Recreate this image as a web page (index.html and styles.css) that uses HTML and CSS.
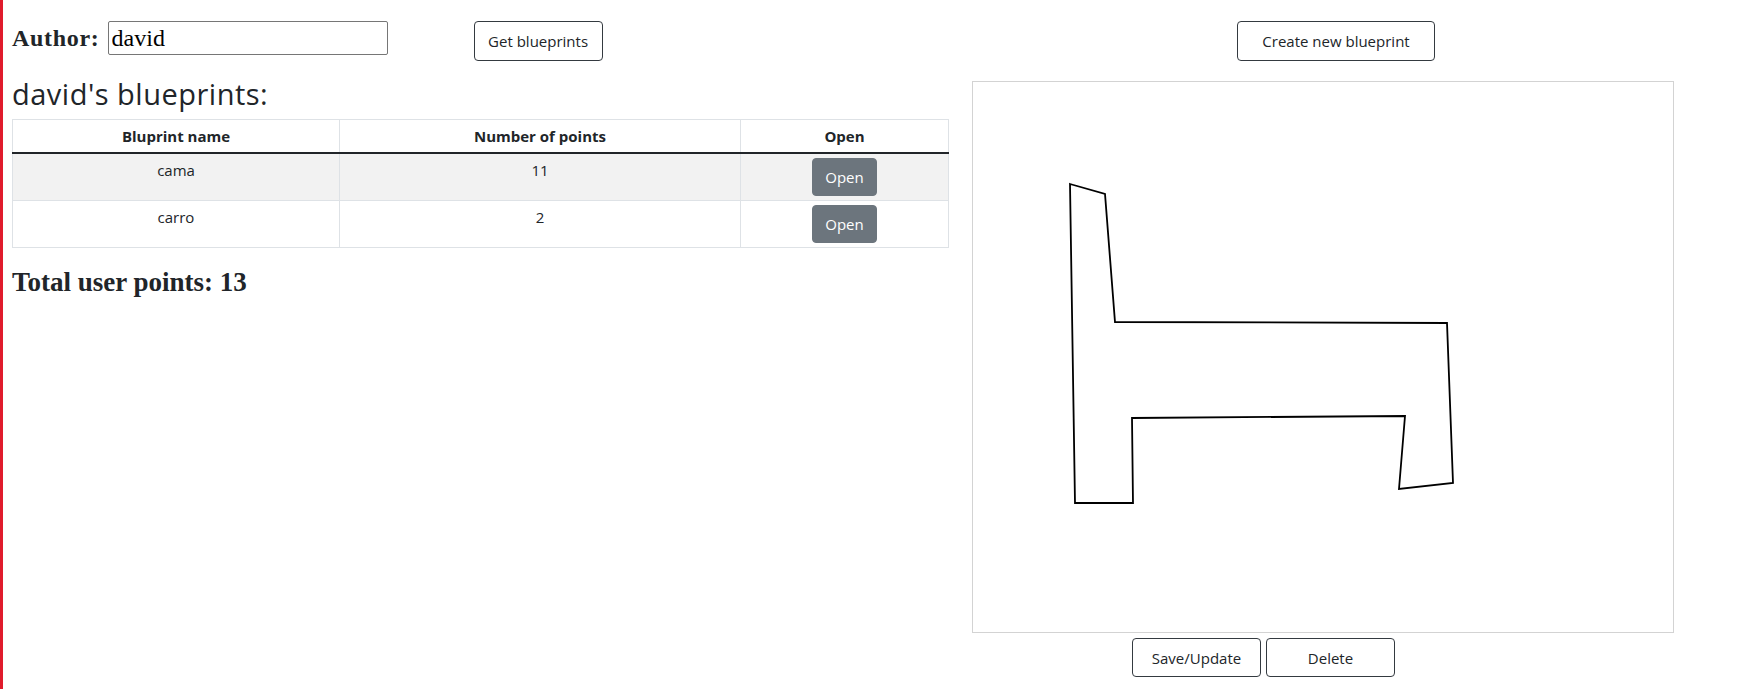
FILE: index.html
```html
<!DOCTYPE html>
<html lang="en">
<head>
<meta charset="utf-8">
<title>Blueprints</title>
<link rel="stylesheet" href="styles.css">
</head>
<body>
<div class="page">
  <section class="left">
    <div class="author-row">
      <label class="author-label" for="author">Author:</label>
      <input class="author-input" id="author" type="text" value="david">
      <button class="btn btn-outline get-btn" type="button">Get blueprints</button>
    </div>
    <h3 class="list-title">david's blueprints:</h3>
    <table class="bp-table">
      <colgroup>
        <col class="c-name">
        <col class="c-points">
        <col class="c-open">
      </colgroup>
      <thead>
        <tr><th>Bluprint name</th><th>Number of points</th><th>Open</th></tr>
      </thead>
      <tbody>
        <tr class="striped"><td>cama</td><td>11</td><td><button class="btn btn-secondary" type="button">Open</button></td></tr>
        <tr><td>carro</td><td>2</td><td><button class="btn btn-secondary" type="button">Open</button></td></tr>
      </tbody>
    </table>
    <h4 class="total">Total user points: 13</h4>
  </section>
  <section class="right">
    <div class="create-row">
      <button class="btn btn-outline create-btn" type="button">Create new blueprint</button>
    </div>
    <div class="canvas-box">
      <svg class="drawing" width="700" height="550" viewBox="0 0 700 550">
        <polygon points="97,102 132,112 142,240 474,241 480,401 426,407 432,334 159,336 160,421 102,421" fill="none" stroke="#000" stroke-width="1.8" stroke-linejoin="miter"/>
      </svg>
    </div>
    <div class="actions">
      <button class="btn btn-outline action-btn" type="button">Save/Update</button>
      <button class="btn btn-outline action-btn" type="button">Delete</button>
    </div>
  </section>
</div>
</body>
</html>
```
FILE: styles.css
```css
html, body {
  margin: 0;
  padding: 0;
  background: #fff;
}

body {
  font-family: "Open Sans", "Noto Sans", sans-serif;
  color: #212529;
  font-size: 15px;
  line-height: 24px;
}

.page {
  display: flex;
  align-items: flex-start;
  gap: 24px;
  min-height: 689px;
  border-left: 3px solid #e01b2c;
  padding-left: 9px;
  box-sizing: border-box;
}

.left {
  width: 936px;
  flex: none;
}

.right {
  width: 702px;
  flex: none;
}

.author-row {
  display: flex;
  align-items: flex-start;
  margin-top: 21px;
  height: 40px;
}

.author-label {
  font-family: "Liberation Serif", "Times New Roman", serif;
  font-weight: bold;
  font-size: 24px;
  line-height: 34px;
  letter-spacing: 0.7px;
  margin-right: 8px;
}

.author-input {
  width: 280px;
  height: 34px;
  box-sizing: border-box;
  border: 1px solid #767676;
  border-radius: 2px;
  padding: 0 3px;
  font-family: "Liberation Serif", "Times New Roman", serif;
  font-size: 24px;
  color: #000;
  background: #fff;
  margin: 0;
}

.btn {
  font-family: "Open Sans", "Noto Sans", sans-serif;
  font-size: 15px;
  line-height: 24px;
  border-radius: 4px;
  cursor: pointer;
  margin: 0;
  box-sizing: border-box;
}

.btn-outline {
  background: #fff;
  color: #212529;
  border: 1px solid #343a40;
  height: 40px;
  padding: 0 13px;
  min-width: 129px;
}

.get-btn {
  margin-left: 86px;
}

.btn-secondary {
  background: #6c757d;
  border: 1px solid #6c757d;
  color: #fff;
  padding: 6px 12px;
  height: 38px;
  display: block;
  margin: 0 auto;
}

.list-title {
  font-size: 29px;
  font-weight: 400;
  line-height: 32px;
  letter-spacing: 0.5px;
  margin: 17px 0 9px;
}

.bp-table {
  width: 936px;
  table-layout: fixed;
  border-collapse: collapse;
  border: 1px solid #dee2e6;
}

.c-name { width: 327px; }
.c-points { width: 401px; }
.c-open { width: 208px; }

.bp-table th,
.bp-table td {
  border: 1px solid #dee2e6;
  padding: 4px;
  text-align: center;
  vertical-align: top;
}

.bp-table th {
  font-weight: 700;
  border-bottom: 2px solid #212529;
}

.bp-table tr.striped td {
  background: #f2f2f2;
}

.total {
  font-family: "Liberation Serif", "Times New Roman", serif;
  font-weight: bold;
  font-size: 27px;
  line-height: 32px;
  margin: 18px 0 0;
}

.create-row {
  display: flex;
  margin-top: 21px;
  padding-left: 265px;
}

.create-btn {
  width: 198px;
}

.canvas-box {
  margin-top: 20px;
  width: 702px;
  height: 552px;
  box-sizing: border-box;
  border: 1px solid #d3d3d3;
  background: #fff;
}

.drawing {
  display: block;
}

.actions {
  display: flex;
  gap: 5px;
  margin-top: 5px;
  padding-left: 160px;
}

.action-btn {
  width: 129px;
  height: 39px;
}
```
